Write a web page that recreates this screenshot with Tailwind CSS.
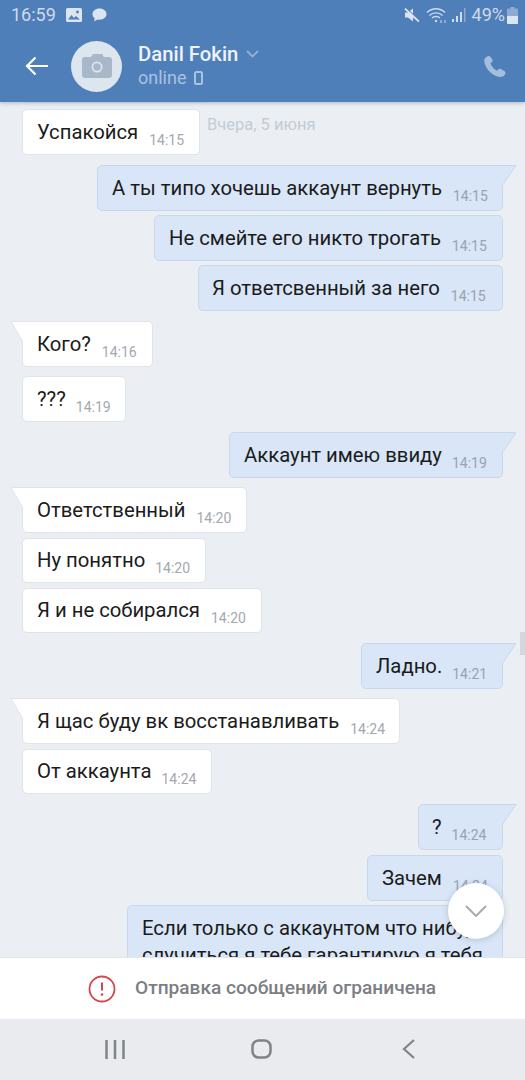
<!DOCTYPE html>
<html lang="ru">
<head>
    <meta charset="UTF-8">
    <meta name="viewport" content="width=device-width, initial-scale=1.0">
    <title>Danil Fokin</title>
    <script src="https://cdn.jsdelivr.net/npm/@tailwindcss/browser@4"></script>
</head>
<body class="bg-[#ebeff4] font-['Roboto',sans-serif]">
    <div class="relative w-[525px] h-[1080px] overflow-hidden flex flex-col">

        <!-- Header -->
        <header class="relative z-10 h-[102px] shrink-0 bg-[#4f7fb8] shadow-[0_1px_4px_rgba(60,80,110,0.35)]">
            <div class="h-[30px] flex items-center pl-[11px] pr-[7px] text-[#cddbec]">
                <span class="text-[18px] leading-none">16:59</span>
                <svg class="ml-[10px]" width="16" height="14" viewBox="0 0 16 14"><rect width="16" height="14" rx="1.5" fill="#dbe5f1"/><path d="M2 11.5l3.5-4.5 2.5 3 2-2 4 3.5z" fill="#4f7fb8"/><circle cx="11.5" cy="4" r="1.4" fill="#4f7fb8"/></svg>
                <svg class="ml-[10px]" width="15" height="14" viewBox="0 0 15 14"><path d="M7.5 0.5c4 0 7 2.5 7 5.6s-3 5.6-7 5.6c-.7 0-1.4-.1-2-.2l-3.5 2 .7-3.1C1.300 9.400.5 7.800.5 6.100.5 3 3.500.5 7.500.5z" fill="#dbe5f1"/></svg>
                <div class="ml-auto flex items-center">
                    <svg width="16" height="16" viewBox="0 0 16 16"><path d="M1 5.500h3l5-4v13l-5-4H1z" fill="#dbe5f1"/><path d="M1 1.500l14 13" stroke="#dbe5f1" stroke-width="2"/><path d="M1.800 0.500l14 13" stroke="#4f7fb8" stroke-width="1"/></svg>
                    <svg class="ml-[6px]" width="22" height="17" viewBox="0 0 22 17" fill="none" stroke="#cddbec" stroke-width="1.300"><path d="M1 5.500c5-5 13-5 18 0"/><path d="M3.500 8.500c3.500-3.500 9.500-3.500 13 0"/><path d="M6 11c2-2 6-2 8 0"/><circle cx="10" cy="14" r="1.200" fill="#cddbec" stroke="none"/><path d="M15 16v-3M19 13v3" stroke-width="1"/></svg>
                    <svg class="ml-[4px]" width="15" height="16" viewBox="0 0 15 16" fill="#cddbec"><rect x="0" y="12" width="2" height="3"/><rect x="4" y="9" width="2" height="6"/><rect x="8" y="5" width="2" height="10"/><rect x="12" y="1" width="1.500" height="14" fill="#8eaad0"/></svg>
                    <span class="ml-[5px] text-[18px] leading-none">49%</span>
                    <svg class="ml-[2px]" width="11" height="17" viewBox="0 0 11 17"><path d="M3.500 0h4v1.500H10a1 1 0 0 1 1 1V16a1 1 0 0 1-1 1H1a1 1 0 0 1-1-1V2.500a1 1 0 0 1 1-1h2.500z" fill="#8eaad0"/><path d="M0 9h11v7a1 1 0 0 1-1 1H1a1 1 0 0 1-1-1z" fill="#dbe5f1"/></svg>
                </div>
            </div>
            <div class="h-[72px] flex items-center">
                <svg class="ml-[25px]" width="24" height="20" viewBox="0 0 24 20" fill="none" stroke="#fff" stroke-width="2.200"><path d="M23 10H2M10.500 1.500L2 10l8.500 8.500"/></svg>
                <div class="ml-[22px] w-[51px] h-[51px] rounded-full bg-[#dde5ee] flex items-center justify-center">
                    <svg width="30" height="24" viewBox="0 0 30 24"><path d="M3 3h6l2-3h9l2 3h5a3 3 0 0 1 3 3v15a3 3 0 0 1-3 3H3a3 3 0 0 1-3-3V6a3 3 0 0 1 3-3z" fill="#a9b8c9"/><circle cx="15" cy="13" r="5.500" fill="#dde5ee"/><circle cx="15" cy="13" r="3.800" fill="#a9b8c9"/></svg>
                </div>
                <div class="ml-[16px] -mt-[1px]">
                    <div class="flex items-center">
                        <span class="text-[20.300px] leading-[24px] font-medium text-[#eef3f9]">Danil Fokin</span>
                        <svg class="ml-[8px]" width="13" height="8" viewBox="0 0 13 8" fill="none" stroke="#93b0d3" stroke-width="1.800"><path d="M1 1l5.500 5.500L12 1"/></svg>
                    </div>
                    <div class="flex items-center mt-[1px]">
                        <span class="text-[18px] leading-[22px] text-[#a9c2e0]">online</span>
                        <svg class="ml-[8px]" width="9" height="14" viewBox="0 0 9 14" fill="none" stroke="#a9c2e0" stroke-width="2"><rect x="1" y="1" width="7" height="12" rx="1.500"/></svg>
                    </div>
                </div>
                <svg class="ml-auto mr-[19px]" width="23" height="23" viewBox="0 0 23 23"><path d="M5.500 1C3 1.500 1 3.500 1.200 6c.8 7 7.500 15 15.300 16 3 .3 5.500-1.500 6-3.800.2-1-.3-1.800-1.200-2.300l-3.500-1.800c-1-.5-1.900-.3-2.600.4l-1.200 1.300c-3-1.300-5.300-4-6.500-7.500l1.500-1.300c.7-.7.900-1.500.5-2.400L7.500 2C7 1.200 6.300.8 5.500 1z" fill="#a3bfdd"/></svg>
            </div>
        </header>

        <!-- Messages -->
        <main class="relative flex-1 overflow-hidden flex flex-col items-start px-[22px] text-[20.300px] leading-[24px] text-[#1b1b1b] *:shrink-0">
            <div class="absolute left-[22px] -top-[20px] w-[188px] h-[21px] bg-white rounded-[5px] border border-[#dfe4ea]"></div>
            <span class="absolute left-[207px] top-[14px] text-[16.500px] leading-[18px] text-[#c3cbd5]">Вчера, 5 июня</span>

            <div class="mt-[7px] h-[46px] w-[178px] flex items-center pl-[14px] bg-white border border-[#dfe4ea] rounded-[5px]"><span class="-mt-[1px]">Успакойся</span><span class="ml-[11px] mt-[15px] text-[14px] text-[#a3a8ae]">14:15</span></div>

            <div class="relative self-end mt-[10px] h-[46px] w-[406px] flex items-center pl-[14px] bg-[#d8e6f8] border border-[#c8d8ec] rounded-[5px] rounded-tr-none"><span class="-mt-[1px]">А ты типо хочешь аккаунт вернуть</span><span class="ml-[11px] mt-[15px] text-[14px] text-[#97a3b1]">14:15</span>
                <svg class="absolute -right-[15px] -top-[1px]" width="16" height="23" viewBox="0 0 16 23"><path d="M0 .5H15L1 21V.5z" fill="#d8e6f8"/><path d="M1 .5h14L1 21" fill="none" stroke="#c8d8ec"/></svg></div>
            <div class="self-end mt-[4px] h-[46px] w-[349px] flex items-center pl-[14px] bg-[#d8e6f8] border border-[#c8d8ec] rounded-[5px]"><span class="-mt-[1px]">Не смейте его никто трогать</span><span class="ml-[11px] mt-[15px] text-[14px] text-[#97a3b1]">14:15</span></div>
            <div class="self-end mt-[4px] h-[46px] w-[305px] flex items-center pl-[13px] bg-[#d8e6f8] border border-[#c8d8ec] rounded-[5px]"><span class="-mt-[1px]">Я ответсвенный за него</span><span class="ml-[11px] mt-[15px] text-[14px] text-[#97a3b1]">14:15</span></div>

            <div class="relative mt-[10px] h-[46px] w-[131px] flex items-center pl-[14px] bg-white border border-[#dfe4ea] rounded-[5px] rounded-tl-none"><span class="-mt-[1px]">Кого?</span><span class="ml-[11px] mt-[15px] text-[14px] text-[#a3a8ae]">14:16</span>
                <svg class="absolute -left-[13px] -top-[1px]" width="14" height="23" viewBox="0 0 14 23"><path d="M14 .5H1L13 21h1z" fill="#fff"/><path d="M14 .5H1L13 21" fill="none" stroke="#dfe4ea"/></svg></div>
            <div class="mt-[9px] h-[46px] w-[104px] flex items-center pl-[14px] bg-white border border-[#dfe4ea] rounded-[5px]"><span class="-mt-[1px]">???</span><span class="ml-[10px] mt-[15px] text-[14px] text-[#a3a8ae]">14:19</span></div>

            <div class="relative self-end mt-[10px] h-[46px] w-[274px] flex items-center pl-[14px] bg-[#d8e6f8] border border-[#c8d8ec] rounded-[5px] rounded-tr-none"><span class="-mt-[1px]">Аккаунт имею ввиду</span><span class="ml-[10px] mt-[15px] text-[14px] text-[#97a3b1]">14:19</span>
                <svg class="absolute -right-[15px] -top-[1px]" width="16" height="23" viewBox="0 0 16 23"><path d="M0 .5H15L1 21V.5z" fill="#d8e6f8"/><path d="M1 .5h14L1 21" fill="none" stroke="#c8d8ec"/></svg></div>

            <div class="relative mt-[9px] h-[46px] w-[225px] flex items-center pl-[14px] bg-white border border-[#dfe4ea] rounded-[5px] rounded-tl-none"><span class="-mt-[1px]">Ответственный</span><span class="ml-[11px] mt-[15px] text-[14px] text-[#a3a8ae]">14:20</span>
                <svg class="absolute -left-[13px] -top-[1px]" width="14" height="23" viewBox="0 0 14 23"><path d="M14 .5H1L13 21h1z" fill="#fff"/><path d="M14 .5H1L13 21" fill="none" stroke="#dfe4ea"/></svg></div>
            <div class="mt-[5px] h-[45px] w-[184px] flex items-center pl-[14px] bg-white border border-[#dfe4ea] rounded-[5px]"><span class="-mt-[1px]">Ну понятно</span><span class="ml-[10px] mt-[15px] text-[14px] text-[#a3a8ae]">14:20</span></div>
            <div class="mt-[5px] h-[45px] w-[240px] flex items-center pl-[14px] bg-white border border-[#dfe4ea] rounded-[5px]"><span class="-mt-[1px]">Я и не собирался</span><span class="ml-[11px] mt-[15px] text-[14px] text-[#a3a8ae]">14:20</span></div>

            <div class="relative self-end mt-[10px] h-[46px] w-[142px] flex items-center pl-[14px] bg-[#d8e6f8] border border-[#c8d8ec] rounded-[5px] rounded-tr-none"><span class="-mt-[1px]">Ладно.</span><span class="ml-[10px] mt-[15px] text-[14px] text-[#97a3b1]">14:21</span>
                <svg class="absolute -right-[15px] -top-[1px]" width="16" height="23" viewBox="0 0 16 23"><path d="M0 .5H15L1 21V.5z" fill="#d8e6f8"/><path d="M1 .5h14L1 21" fill="none" stroke="#c8d8ec"/></svg></div>

            <div class="relative mt-[9px] h-[46px] w-[378px] flex items-center pl-[14px] bg-white border border-[#dfe4ea] rounded-[5px] rounded-tl-none"><span class="-mt-[1px]">Я щас буду вк восстанавливать</span><span class="ml-[11px] mt-[15px] text-[14px] text-[#a3a8ae]">14:24</span>
                <svg class="absolute -left-[13px] -top-[1px]" width="14" height="23" viewBox="0 0 14 23"><path d="M14 .5H1L13 21h1z" fill="#fff"/><path d="M14 .5H1L13 21" fill="none" stroke="#dfe4ea"/></svg></div>
            <div class="mt-[5px] h-[45px] w-[190px] flex items-center pl-[14px] bg-white border border-[#dfe4ea] rounded-[5px]"><span class="-mt-[1px]">От аккаунта</span><span class="ml-[10px] mt-[15px] text-[14px] text-[#a3a8ae]">14:24</span></div>

            <div class="relative self-end mt-[10px] h-[46px] w-[85px] flex items-center pl-[13px] bg-[#d8e6f8] border border-[#c8d8ec] rounded-[5px] rounded-tr-none"><span class="-mt-[1px]">?</span><span class="ml-[10px] mt-[15px] text-[14px] text-[#97a3b1]">14:24</span>
                <svg class="absolute -right-[15px] -top-[1px]" width="16" height="23" viewBox="0 0 16 23"><path d="M0 .5H15L1 21V.5z" fill="#d8e6f8"/><path d="M1 .5h14L1 21" fill="none" stroke="#c8d8ec"/></svg></div>
            <div class="self-end mt-[5px] h-[46px] w-[136px] flex items-center pl-[14px] bg-[#d8e6f8] border border-[#c8d8ec] rounded-[5px]"><span class="-mt-[1px]">Зачем</span><span class="ml-[11px] mt-[15px] text-[14px] text-[#97a3b1]">14:24</span></div>
            <div class="self-end mt-[4px] w-[376px] pl-[14px] pt-[9px] pb-[9px] bg-[#d8e6f8] border border-[#c8d8ec] rounded-[5px] leading-[27px] whitespace-nowrap overflow-hidden">Если только с аккаунтом что нибудь<br>случиться я тебе гарантирую я тебя</div>

            <button class="absolute left-[448px] top-[781px] w-[56px] h-[56px] rounded-full bg-white shadow-[0_1px_6px_rgba(60,80,110,0.25)] flex items-center justify-center">
                <svg width="22" height="12" viewBox="0 0 22 12" fill="none" stroke="#a4abb3" stroke-width="2"><path d="M1 1l10 10L21 1"/></svg>
            </button>
            <div class="absolute right-0 top-[530px] w-[5px] h-[23px] bg-[#d4d8dd]"></div>
        </main>

        <!-- Restricted notice -->
        <div class="relative z-10 h-[62px] shrink-0 bg-white border-t border-[#e4e6e9] flex items-center pl-[88px]">
            <svg width="28" height="28" viewBox="0 0 28 28" fill="none"><circle cx="14" cy="14" r="12.500" stroke="#d1494d" stroke-width="1.800"/><path d="M14 7.500v8" stroke="#d1494d" stroke-width="2"/><circle cx="14" cy="19.500" r="1.300" fill="#d1494d"/></svg>
            <span class="ml-[19px] text-[19.100px] font-medium text-[#7b7e83]">Отправка сообщений ограничена</span>
        </div>

        <!-- Nav bar -->
        <nav class="h-[61px] shrink-0 bg-[#e9ebef] relative flex items-center justify-center">
            <svg class="absolute left-[105px] top-[21px]" width="20" height="19" viewBox="0 0 20 19" stroke="#808489" stroke-width="2.500"><path d="M1.500 0v19M10 0v19M18.500 0v19"/></svg>
            <svg class="absolute left-[251px] top-[20px]" width="21" height="20" viewBox="0 0 21 20" fill="none" stroke="#808489" stroke-width="2.500"><rect x="1.500" y="1.500" width="18" height="17" rx="6"/></svg>
            <svg class="absolute left-[402px] top-[20px]" width="13" height="20" viewBox="0 0 13 20" fill="none" stroke="#808489" stroke-width="2.200"><path d="M12 1L2 10l10 9"/></svg>
        </nav>
    </div>
</body>
</html>
